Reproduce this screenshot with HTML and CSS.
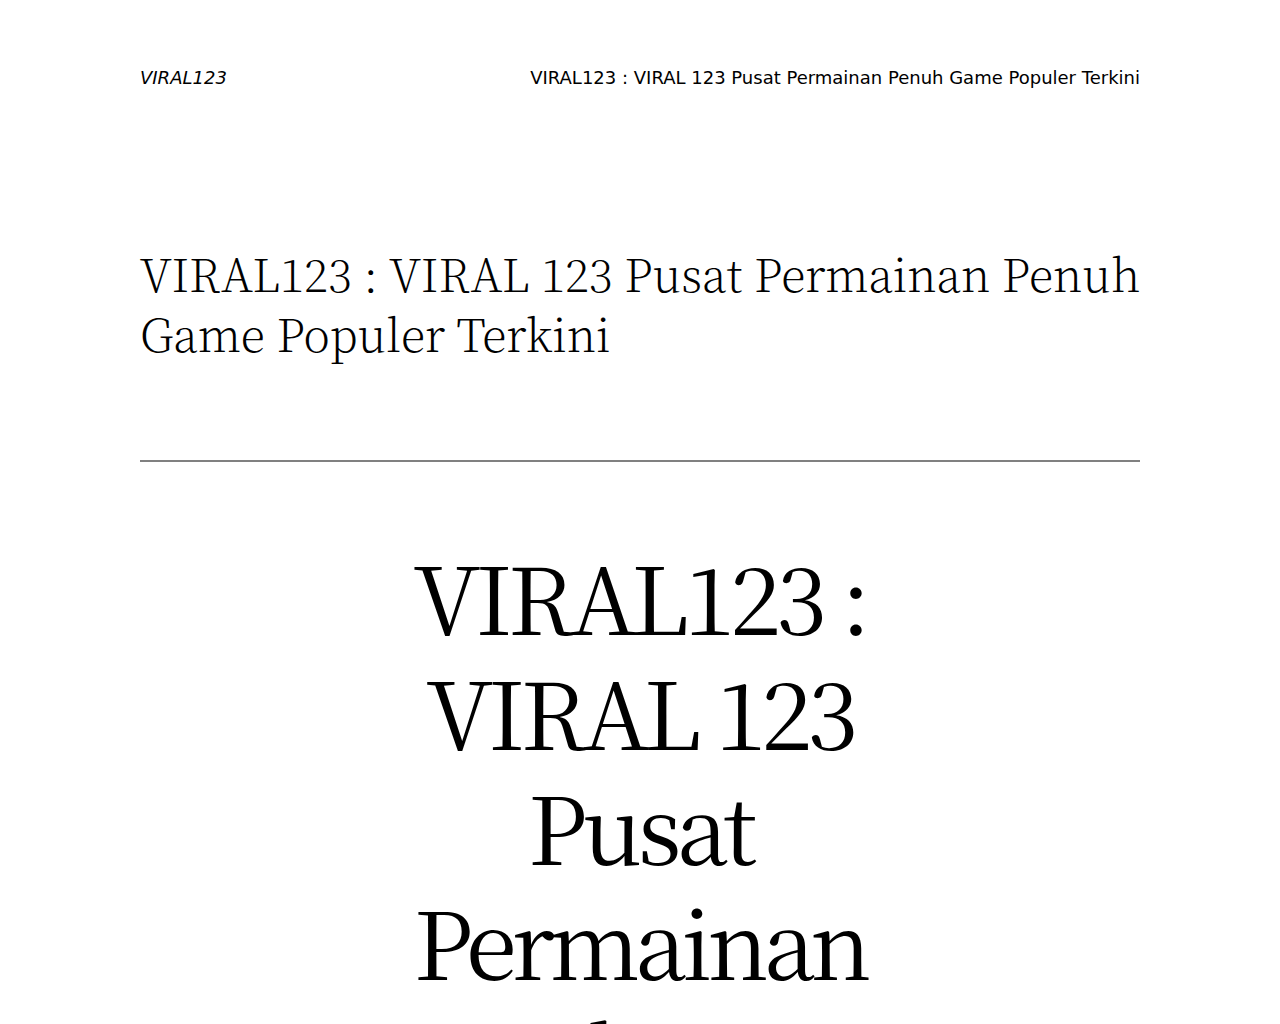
FILE: index.html
```html
<!DOCTYPE html>
<html lang="id">
<head>
  <meta charset="UTF-8">
  <title>VIRAL123 : VIRAL 123 Pusat Permainan Penuh Game Populer Terkini</title>
  <link rel="stylesheet" href="styles.css">
</head>
<body>

  <div class="wrap">
    <header class="site-header">
      <a class="brand" href="#">VIRAL123</a>
      <a class="tagline" href="#">VIRAL123 : VIRAL 123 Pusat Permainan Penuh Game Populer Terkini</a>
    </header>

    <h1 class="page-title">VIRAL123 : VIRAL 123 Pusat Permainan Penuh Game Populer Terkini</h1>

    <hr class="divider">

    <article class="post">
      <h2 class="post-title">VIRAL123 : VIRAL 123 Pusat Permainan Penuh Game Populer Terkini</h2>
    </article>
  </div>

</body>
</html>
```

FILE: styles.css
```css
body {
  margin: 0;
  font-family: "DejaVu Sans", sans-serif;
  color: #000;
  background: #fff;
}
a {
  color: inherit;
  text-decoration: none;
}
.wrap {
  width: 1000px;
  margin: 0 auto;
}
.site-header {
  display: flex;
  justify-content: space-between;
  padding-top: 67px;
  font-size: 18px;
  line-height: 22px;
}
.brand {
  font-style: italic;
}
.page-title {
  margin: 154px -8px 0 0;
  font-family: "Noto Serif CJK JP", "Liberation Serif", serif;
  font-weight: 200;
  font-size: 45px;
  line-height: 60px;
  letter-spacing: -0.1px;
}
.divider {
  margin: 97px 0 0;
  border: 0;
  border-top: 2px solid #808080;
}
.post-title {
  width: 540px;
  margin: 76px auto 0;
  text-align: center;
  font-family: "Noto Serif CJK JP", "Liberation Serif", serif;
  font-weight: 400;
  font-size: 93px;
  line-height: 115px;
  letter-spacing: -0.055em;
}
```
